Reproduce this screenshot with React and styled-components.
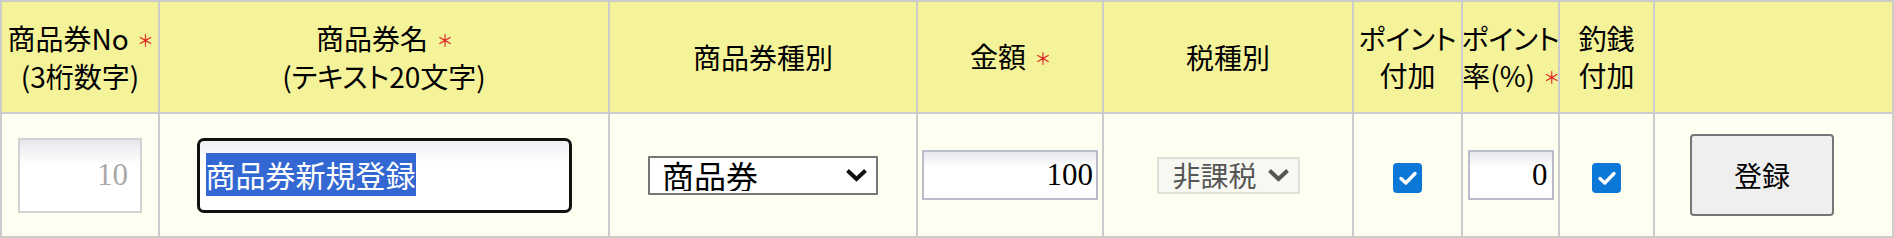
import React from "react";
import styled, { createGlobalStyle } from "styled-components";

const GlobalStyle = createGlobalStyle`
  body {
    margin: 0;
    background: #ffffff;
    font-family: "Noto Sans CJK JP", "Noto Sans", sans-serif;
  }
`;

const Sheet = styled.div`
  display: grid;
  grid-template-columns: 156px 448px 306px 184px 248px 107px 95px 93px 237px;
  grid-template-rows: 110px 122px;
  gap: 2px;
  padding: 2px;
  width: 1894px;
  box-sizing: border-box;
  background: #cccccc;
`;

const HeadCell = styled.div`
  background: #f5f39a;
  display: flex;
  flex-direction: column;
  align-items: center;
  justify-content: center;
  font-size: 28px;
  line-height: 37px;
  color: #000;
  white-space: nowrap;
  font-feature-settings: "palt";
`;

const Req = styled.span`
  color: #e02525;
  font-size: 17px;
  margin-left: 10px;
  vertical-align: 3px;
`;

const Cell = styled.div`
  background: #fefff0;
  display: flex;
  align-items: center;
  justify-content: ${(p) => (p.$start ? "flex-start" : "center")};
  padding-left: ${(p) => p.$padLeft || 0}px;
`;

const NumInput = styled.input`
  width: ${(p) => p.$w}px;
  height: ${(p) => p.$h}px;
  box-sizing: border-box;
  border: 2px solid ${(p) => (p.disabled ? "#d2d2d2" : "#b9bccb")};
  border-radius: 0;
  background: linear-gradient(to bottom, #e6e8ec 0%, #ffffff 35%);
  font-family: "Liberation Serif", serif;
  font-size: 31px;
  text-align: right;
  padding: 0 ${(p) => p.$padRight}px 0 0;
  color: ${(p) => (p.disabled ? "#a9a9a9" : "#000")};
  -webkit-text-fill-color: ${(p) => (p.disabled ? "#a9a9a9" : "#000")};
  opacity: 1;
  outline: none;
  margin: 0;
`;

const NameBox = styled.div`
  width: 375px;
  height: 75px;
  box-sizing: border-box;
  border: 3px solid #111;
  border-radius: 7px;
  background: linear-gradient(to bottom, #eceef1 0%, #ffffff 30%);
  display: flex;
  align-items: center;
  padding-left: 6px;
`;

const Selected = styled.span`
  background: #3367d1;
  color: #fff;
  font-size: 30px;
  line-height: 43px;
  height: 43px;
  margin-top: -2px;
`;

const SelectWrap = styled.div`
  position: relative;
  width: ${(p) => p.$w}px;
  height: ${(p) => p.$h}px;
`;

const Select = styled.select`
  appearance: none;
  width: 100%;
  height: 100%;
  box-sizing: border-box;
  margin: 0;
  border: 2px solid ${(p) => (p.$muted ? "#e0e0d8" : "#767676")};
  border-radius: 1px;
  background: ${(p) => (p.$muted ? "#f8f8f3" : "#ffffff")};
  color: ${(p) => (p.$muted ? "#555555" : "#000")};
  font-family: "Noto Sans CJK JP", sans-serif;
  font-size: ${(p) => p.$size}px;
  line-height: 1;
  padding: 0 0 0 ${(p) => p.$padLeft}px;
  outline: none;
`;

const Chevron = styled.svg`
  position: absolute;
  right: 10px;
  top: 50%;
  transform: translateY(-50%);
  pointer-events: none;
`;

const CheckLabel = styled.label`
  display: inline-flex;
  margin-top: 6px;
  input {
    display: none;
  }
`;

const CheckBox = styled.span`
  width: 29px;
  height: 30px;
  border-radius: 4px;
  background: #0b77d6;
  display: flex;
  align-items: center;
  justify-content: center;
`;

const SubmitButton = styled.button`
  width: 144px;
  height: 82px;
  box-sizing: border-box;
  border: 2px solid #767676;
  border-radius: 4px;
  background: #efefef;
  color: #000;
  font-family: "Noto Sans CJK JP", sans-serif;
  font-size: 28px;
  padding: 0;
  margin: 0;
`;

function Arrow({ color }) {
  return (
    <Chevron width="23" height="15" viewBox="0 0 23 15">
      <path d="M2.5 3 L11.5 11.5 L20.5 3" fill="none" stroke={color} strokeWidth="4" />
    </Chevron>
  );
}

function Check() {
  return (
    <CheckLabel>
      <input type="checkbox" defaultChecked />
      <CheckBox>
        <svg width="20" height="16" viewBox="0 0 20 16">
          <path d="M3 8.5 L7.8 13 L17 3.5" fill="none" stroke="#fff" strokeWidth="3.4" strokeLinecap="round" strokeLinejoin="round" />
        </svg>
      </CheckBox>
    </CheckLabel>
  );
}

export default function App() {
  return (
    <>
      <GlobalStyle />
      <Sheet>
        <HeadCell>
          <div>商品券No<Req>＊</Req></div>
          <div>(3桁数字)</div>
        </HeadCell>
        <HeadCell>
          <div>商品券名<Req>＊</Req></div>
          <div>(テキスト20文字)</div>
        </HeadCell>
        <HeadCell>商品券種別</HeadCell>
        <HeadCell>
          <div>金額<Req>＊</Req></div>
        </HeadCell>
        <HeadCell>税種別</HeadCell>
        <HeadCell>
          <div>ポイント</div>
          <div>付加</div>
        </HeadCell>
        <HeadCell>
          <div>ポイント</div>
          <div>率(%)<Req>＊</Req></div>
        </HeadCell>
        <HeadCell>
          <div>釣銭</div>
          <div>付加</div>
        </HeadCell>
        <HeadCell />

        <Cell>
          <NumInput $w={124} $h={75} $padRight={12} value="10" disabled readOnly />
        </Cell>
        <Cell>
          <NameBox>
            <Selected>商品券新規登録</Selected>
          </NameBox>
        </Cell>
        <Cell>
          <SelectWrap $w={230} $h={39}>
            <Select $size={32} $padLeft={12} defaultValue="gift">
              <option value="gift">商品券</option>
            </Select>
            <Arrow color="#111" />
          </SelectWrap>
        </Cell>
        <Cell>
          <NumInput $w={176} $h={50} $padRight={3} value="100" readOnly />
        </Cell>
        <Cell>
          <SelectWrap $w={143} $h={37}>
            <Select $muted $size={28} $padLeft={14} defaultValue="none">
              <option value="none">非課税</option>
            </Select>
            <Arrow color="#555" />
          </SelectWrap>
        </Cell>
        <Cell>
          <Check />
        </Cell>
        <Cell>
          <NumInput $w={86} $h={50} $padRight={4} value="0" readOnly />
        </Cell>
        <Cell>
          <Check />
        </Cell>
        <Cell $start $padLeft={35}>
          <SubmitButton type="button">登録</SubmitButton>
        </Cell>
      </Sheet>
    </>
  );
}
